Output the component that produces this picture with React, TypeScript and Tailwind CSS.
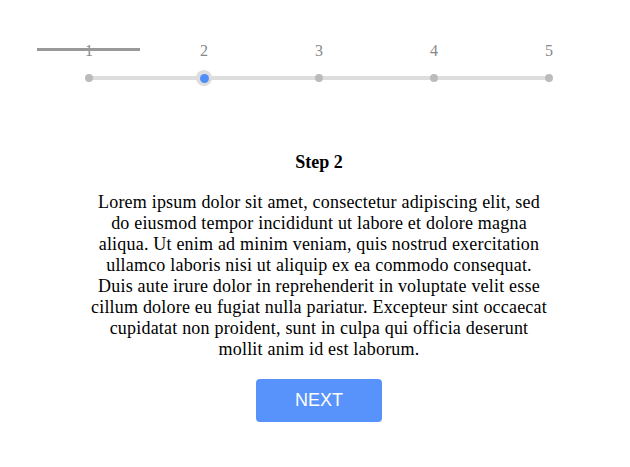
const steps = [1, 2, 3, 4, 5]

const lines = [
  'Lorem ipsum dolor sit amet, consectetur adipiscing elit, sed',
  'do eiusmod tempor incididunt ut labore et dolore magna',
  'aliqua. Ut enim ad minim veniam, quis nostrud exercitation',
  'ullamco laboris nisi ut aliquip ex ea commodo consequat.',
  'Duis aute irure dolor in reprehenderit in voluptate velit esse',
  'cillum dolore eu fugiat nulla pariatur. Excepteur sint occaecat',
  'cupidatat non proident, sunt in culpa qui officia deserunt',
  'mollit anim id est laborum.',
]

export default function App() {
  const active = 2

  return (
    <div className="min-h-screen bg-white" style={{ fontFamily: '"Liberation Serif", serif' }}>
      <div className="pt-[41px] ml-[89px] w-[460px] flex flex-col items-stretch">
        {/* Stepper */}
        <div className="relative h-[45px]">
          <div className="absolute left-0 right-0 top-[35px] h-[4px] bg-[#dddddd]" />
          <div className="relative flex justify-between h-full">
            {steps.map((s) => (
              <div key={s} className="relative w-0 flex flex-col items-center">
                {s === 1 && (
                  <div className="absolute top-[7px] left-[-52px] w-[103px] h-[3px] bg-[#999999]" />
                )}
                <span className="block text-[16px] leading-[20px] h-[20px] text-[#888888] whitespace-nowrap">{s}</span>
                <div className="mt-[9px] h-[16px] flex items-center justify-center">
                  {s === active ? (
                    <div className="w-[16px] h-[16px] rounded-full bg-[#dddddd] flex items-center justify-center">
                      <div className="w-[9px] h-[9px] rounded-full bg-[#4f8ef7]" />
                    </div>
                  ) : (
                    <div className="w-[8px] h-[8px] rounded-full bg-[#bbbbbb]" />
                  )}
                </div>
              </div>
            ))}
          </div>
        </div>

        {/* Content */}
        <div className="mt-[66px] flex flex-col items-center text-center text-black">
          <h2 className="text-[18px] leading-[21px] font-bold">Step {active}</h2>
          <p className="mt-[19px] text-[18px] leading-[21px] tracking-[0.2px]">
            {lines.map((l, i) => (
              <span key={i} className="block whitespace-nowrap">
                {l}
              </span>
            ))}
          </p>
          <button
            className="mt-[19px] w-[126px] h-[43px] rounded-[4px] bg-[#5893fc] text-white text-[18px]"
            style={{ fontFamily: '"Liberation Sans", Arial, sans-serif' }}
          >
            NEXT
          </button>
        </div>
      </div>
    </div>
  )
}
